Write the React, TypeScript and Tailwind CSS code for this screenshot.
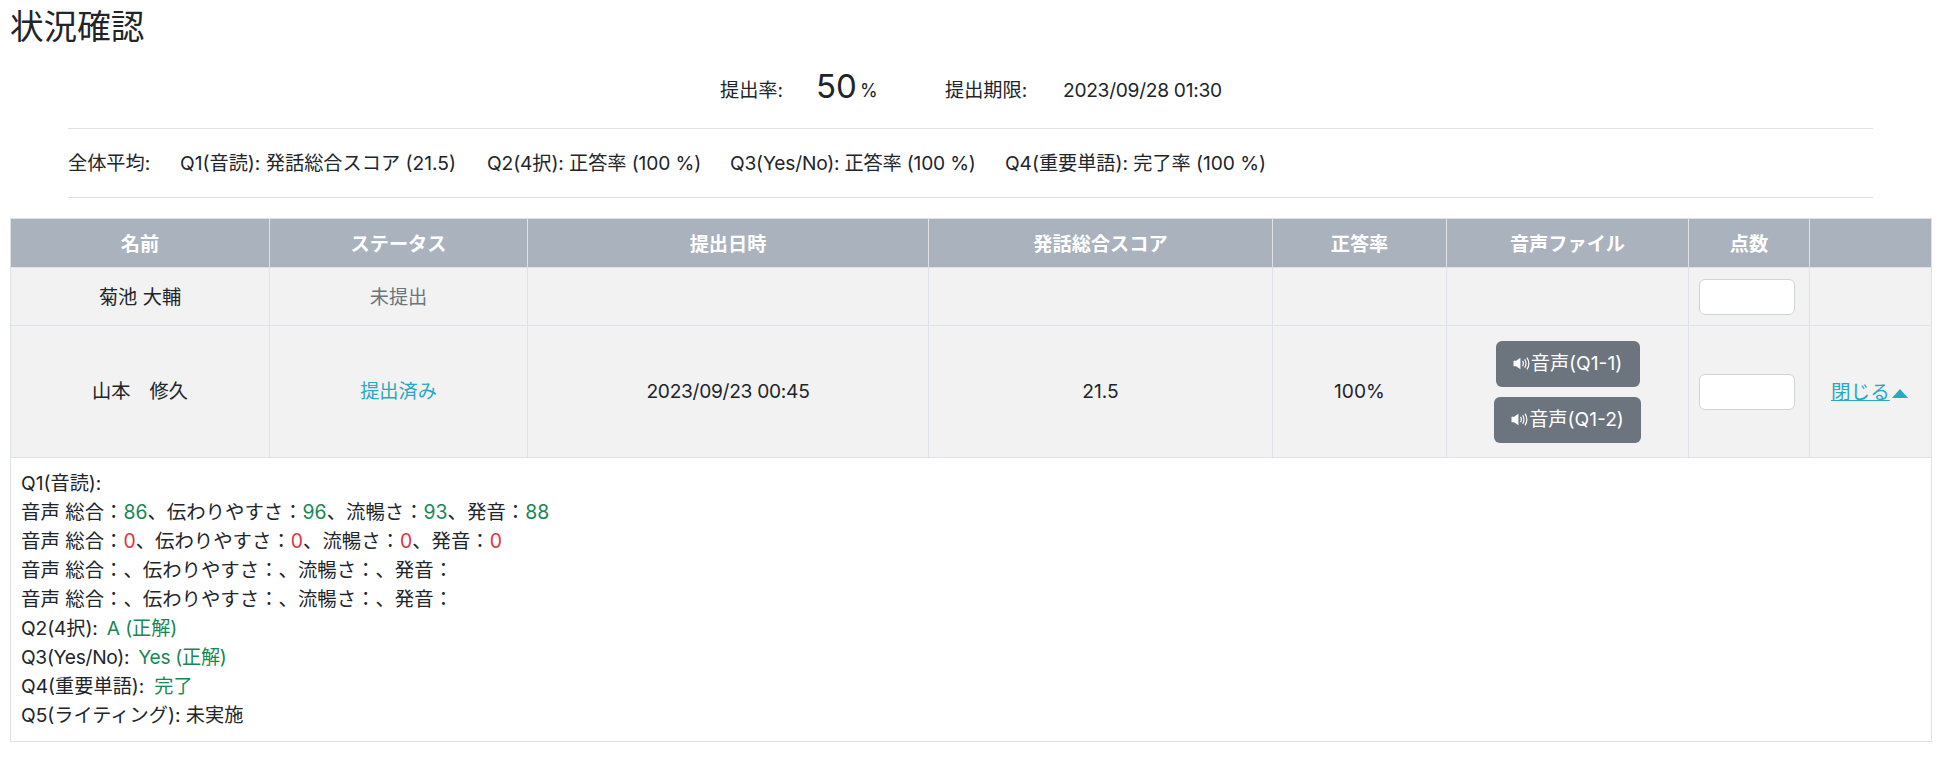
const Speaker = () => (
  <svg width="18" height="15" viewBox="0 0 17 14" className="shrink-0">
    <path d="M0.5 4.5h2.5L7 1.5v11L3 9.5H0.5z" fill="currentColor" />
    <path d="M9 4.5q1.6 2.5 0 5M11 3q2.6 4 0 8M13.2 1.5q3.6 5.5 0 11" fill="none" stroke="currentColor" strokeWidth="1.1" />
  </svg>
);

const AudioButton = ({ label, width }: { label: string; width: string }) => (
  <button className={`${width} h-[46px] pb-[1px] flex items-center justify-center rounded-[6px] bg-[#6c757d] text-white`}>
    <Speaker />
    {label}
  </button>
);

const ScoreInput = () => (
  <input className="block w-[96px] h-[36px] rounded-[6px] border border-[#ced4da] bg-white" />
);

const Good = ({ children }: { children: React.ReactNode }) => (
  <span className="text-[#198754]">{children}</span>
);

const Bad = ({ children }: { children: React.ReactNode }) => (
  <span className="text-[#dc3545]">{children}</span>
);

const th = "border border-[#dee2e6] font-bold text-white text-center pt-[2px]";
const td = "border border-[#dee2e6] text-center";

export default function App() {
  return (
    <main
      className="bg-white min-h-screen text-[#212529] text-[19.2px] leading-[29px] overflow-hidden"
      style={{ fontFamily: 'Inter, "Noto Sans CJK JP", sans-serif' }}
    >
      {/* Title */}
      <h1 className="pl-[10px] pt-[4px] h-[60px] text-[33.6px] leading-[46px] font-normal">状況確認</h1>

      {/* Submission rate */}
      <div className="flex items-center h-[56px] pl-[720px] pt-[4px]">
        <span className="w-[98px] -mr-[2px]">提出率:</span>
        <span className="w-[44px] text-[33px] leading-[40px] -mt-[8px]">50</span>
        <span className="w-[85px] text-[18px]">%</span>
        <span className="w-[118px]">提出期限:</span>
        <span className="tracking-[-0.3px]">2023/09/28 01:30</span>
      </div>

      {/* Averages */}
      <div className="mx-[68px] mt-[12px] w-[1805px] h-[70px] border-y border-[#dee2e6] flex items-center">
        <span className="w-[112px]">全体平均:</span>
        <span className="w-[307px]">Q1(音読): 発話総合スコア (21.5)</span>
        <span className="w-[243px] tracking-[-0.1px]">Q2(4択): 正答率 (100 %)</span>
        <span className="w-[275px] tracking-[-0.2px]">Q3(Yes/No): 正答率 (100 %)</span>
        <span className="tracking-[-0.05px]">Q4(重要単語): 完了率 (100 %)</span>
      </div>

      {/* Table */}
      <table className="ml-[10px] mt-[20px] w-[1921px] table-fixed border-collapse">
        <colgroup>
          <col className="w-[259px]" />
          <col className="w-[258px]" />
          <col className="w-[401px]" />
          <col className="w-[344px]" />
          <col className="w-[174px]" />
          <col className="w-[242px]" />
          <col className="w-[121px]" />
          <col className="w-[122px]" />
        </colgroup>
        <thead>
          <tr className="h-[49px] bg-[#aab3bd]">
            <th className={th}>名前</th>
            <th className={th}>ステータス</th>
            <th className={th}>提出日時</th>
            <th className={th}>発話総合スコア</th>
            <th className={th}>正答率</th>
            <th className={th}>音声ファイル</th>
            <th className={th}>点数</th>
            <th className={th}></th>
          </tr>
        </thead>
        <tbody>
          <tr className="h-[58px] bg-[#f2f2f2]">
            <td className={`${td} pt-[2px]`}>菊池 大輔</td>
            <td className={`${td} pt-[2px] text-[#6c757d]`}>未提出</td>
            <td className={td}></td>
            <td className={td}></td>
            <td className={td}></td>
            <td className={td}></td>
            <td className={`${td} px-[10px]`}>
              <ScoreInput />
            </td>
            <td className={td}></td>
          </tr>
          <tr className="h-[132px] bg-[#f2f2f2]">
            <td className={td}>山本　修久</td>
            <td className={`${td} text-[#2aa7c2]`}>提出済み</td>
            <td className={`${td} tracking-[-0.3px]`}>2023/09/23 00:45</td>
            <td className={td}>21.5</td>
            <td className={td}>100%</td>
            <td className={td}>
              <div className="flex flex-col items-center gap-[10px]">
                <AudioButton label="音声(Q1-1)" width="w-[144px]" />
                <AudioButton label="音声(Q1-2)" width="w-[147px]" />
              </div>
            </td>
            <td className={`${td} px-[10px]`}>
              <ScoreInput />
            </td>
            <td className={`${td} text-left pl-[21px] pt-[2px] text-[19.6px] text-[#2aa7c2]`}>
              <a className="underline">閉じる</a>
              <span className="inline-block ml-[2px] align-[1px] w-0 h-0 border-x-[8px] border-x-transparent border-b-[9px] border-b-[#2aa7c2]" />
            </td>
          </tr>
          <tr>
            <td colSpan={8} className="border border-[#dee2e6] px-[10px] pt-[9px] pb-[10px] h-[284px]">
              <div>Q1(音読):</div>
              <div className="text-[19.4px]">音声 総合：<Good>86</Good>、伝わりやすさ：<Good>96</Good>、流暢さ：<Good>93</Good>、発音：<Good>88</Good></div>
              <div className="text-[19.4px]">音声 総合：<Bad>0</Bad>、伝わりやすさ：<Bad>0</Bad>、流暢さ：<Bad>0</Bad>、発音：<Bad>0</Bad></div>
              <div className="text-[19.4px]">音声 総合：、伝わりやすさ：、流暢さ：、発音：</div>
              <div className="text-[19.4px]">音声 総合：、伝わりやすさ：、流暢さ：、発音：</div>
              <div className="flex gap-[9px] tracking-[-0.1px]"><span>Q2(4択):</span><Good>A (正解)</Good></div>
              <div className="flex gap-[9px] tracking-[-0.3px]"><span>Q3(Yes/No):</span><Good>Yes (正解)</Good></div>
              <div className="flex gap-[10px]"><span>Q4(重要単語):</span><Good>完了</Good></div>
              <div>Q5(ライティング): 未実施</div>
            </td>
          </tr>
        </tbody>
      </table>
    </main>
  );
}
